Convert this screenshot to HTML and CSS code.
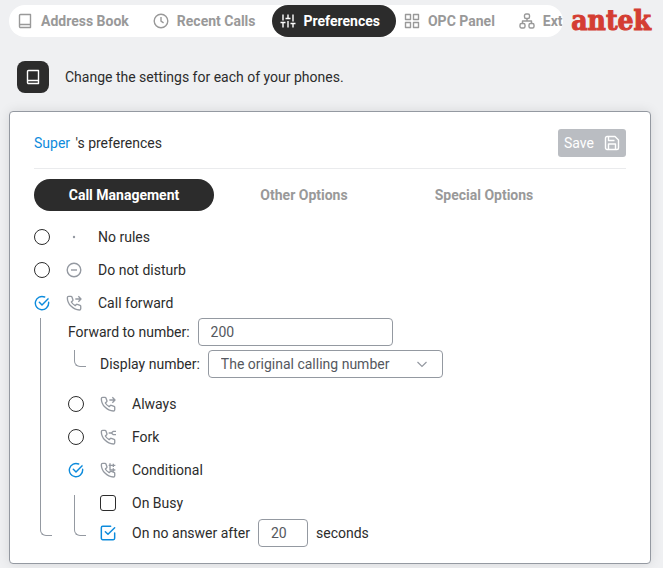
FILE: index.html
```html
<!DOCTYPE html>
<html lang="en">
<head>
    <meta charset="UTF-8">
    <meta name="viewport" content="width=device-width, initial-scale=1.0">
    <title>Preferences</title>
    <link rel="stylesheet" href="styles.css">
</head>
<body>
    <header class="header">
        <nav class="nav">
            <a href="#" class="nav-item">
                <svg class="icon" viewBox="0 0 16 16"><path d="M3.500 1.500h10v13h-10a1 1 0 0 1-1-1V2.500a1 1 0 0 1 1-1zM2.500 12.500a1 1 0 0 1 1-1h10"/></svg>
                Address Book
            </a>
            <a href="#" class="nav-item">
                <svg class="icon" viewBox="0 0 16 16"><circle cx="8" cy="8" r="6.800"/><path d="M8 4v4.200l2.600 1.600"/></svg>
                Recent Calls
            </a>
            <a href="#" class="nav-item active">
                <svg class="icon" viewBox="0 0 16 16"><path d="M3 1.500v6M3 9.500v5M.5 9.500h5M8 1.500v4M8 8v6.500M5.500 5.500h5M13 1.500v7M13 10.500v4M10.500 10.500h5"/></svg>
                Preferences
            </a>
            <a href="#" class="nav-item">
                <svg class="icon" viewBox="0 0 16 16"><path d="M1.500 1.500h5v5h-5zM9.500 1.500h5v5h-5zM1.500 9.500h5v5h-5zM9.500 9.500h5v5h-5z"/></svg>
                OPC Panel
            </a>
            <a href="#" class="nav-item">
                <svg class="icon" viewBox="0 0 16 16"><rect x="5.500" y="1" width="5" height="4.500" rx="1.500"/><rect x="1" y="10.500" width="5" height="4.500" rx="1.500"/><rect x="10" y="10.500" width="5" height="4.500" rx="1.500"/><path d="M8 5.500V8M3.500 10.500V8h9v2.500"/></svg>
                Ext
            </a>
        </nav>
        <div class="logo">antek</div>
    </header>

    <div class="intro">
        <div class="intro-icon">
            <svg class="icon" viewBox="0 0 16 16"><path d="M3.500 1.500h10v13h-10a1 1 0 0 1-1-1V2.500a1 1 0 0 1 1-1zM2.500 12.500a1 1 0 0 1 1-1h10"/></svg>
        </div>
        <p>Change the settings for each of your phones.</p>
    </div>

    <main class="card">
        <div class="card-head">
            <h1 class="title"><a href="#">Super</a> 's preferences</h1>
            <button class="save" type="button">
                Save
                <svg class="icon" viewBox="0 0 16 16"><path d="M3 1.500h8L14.500 5v8a1.500 1.500 0 0 1-1.500 1.500H3A1.500 1.500 0 0 1 1.500 13V3A1.500 1.500 0 0 1 3 1.500zM4.500 14.500V9h7v5.500M4.500 1.500V5.500h6"/></svg>
            </button>
        </div>

        <div class="tabs">
            <button class="tab active" type="button">Call Management</button>
            <button class="tab" type="button">Other Options</button>
            <button class="tab" type="button">Special Options</button>
        </div>

        <form class="rules">
            <div class="row">
                <input type="radio" name="rule" id="none">
                <svg class="icon" viewBox="0 0 16 16"><circle class="dot" cx="8" cy="8" r="1.200"/></svg>
                <label for="none">No rules</label>
            </div>
            <div class="row">
                <input type="radio" name="rule" id="dnd">
                <svg class="icon" viewBox="0 0 16 16"><circle cx="8" cy="8" r="6.800"/><path d="M5 8h6"/></svg>
                <label for="dnd">Do not disturb</label>
            </div>
            <div class="row">
                <input type="radio" name="rule" id="forward" checked>
                <svg class="icon" viewBox="0 0 24 24"><use href="#phone"/><path d="M14 6h8.500M18.500 2l4 4l-4 4"/></svg>
                <label for="forward">Call forward</label>
            </div>

            <div class="branch main-branch">
                <div class="line"></div>
                <div class="branch-body">
                    <div class="field">
                        <label for="number">Forward to number:</label>
                        <input type="text" class="text-input" id="number" value="200">
                    </div>
                    <div class="branch display">
                        <div class="line"></div>
                        <div class="field">
                            <label for="display">Display number:</label>
                            <select class="select" id="display">
                                <option>The original calling number</option>
                            </select>
                        </div>
                    </div>

                    <div class="row">
                        <input type="radio" name="mode" id="always">
                        <svg class="icon" viewBox="0 0 24 24"><use href="#phone"/><path d="M14 6h8.500M18.500 2l4 4l-4 4"/></svg>
                        <label for="always">Always</label>
                    </div>
                    <div class="row">
                        <input type="radio" name="mode" id="fork">
                        <svg class="icon" viewBox="0 0 24 24"><use href="#phone"/><path d="M13 6h4.500M24 3.500h-4l-3 2.500l3 2.500h4"/></svg>
                        <label for="fork">Fork</label>
                    </div>
                    <div class="row">
                        <input type="radio" name="mode" id="conditional" checked>
                        <svg class="icon" viewBox="0 0 24 24"><use href="#phone"/><path d="M15 2v10h8M13 5h10M20 2.500v5M20 9.500v5"/></svg>
                        <label for="conditional">Conditional</label>
                    </div>
                    <div class="branch conditions">
                        <div class="line"></div>
                        <div class="branch-body">
                            <div class="row">
                                <input type="checkbox" id="busy">
                                <label for="busy">On Busy</label>
                            </div>
                            <div class="row last">
                                <input type="checkbox" id="noanswer" checked>
                                <div class="field">
                                    <label for="noanswer">On no answer after</label>
                                    <input type="text" class="text-input short" id="seconds" value="20">
                                    <label for="seconds">seconds</label>
                                </div>
                            </div>
                        </div>
                    </div>
                </div>
            </div>
        </form>
    </main>

    <!-- shared handset shape -->
    <svg class="defs">
        <symbol id="phone" viewBox="0 0 24 24">
            <path d="M4 2h3.500a1.500 1.500 0 0 1 1.400 1l1.500 4a1.500 1.500 0 0 1-.4 1.600L8 10.500a15 15 0 0 0 5.800 5.500l1.700-1.700a1.500 1.500 0 0 1 1.600-.3l4 1.500a1.500 1.500 0 0 1 1 1.400V20.500a2 2 0 0 1-2 2C10.500 22 2 13.500 2 4a2 2 0 0 1 2-2z"/>
        </symbol>
    </svg>
</body>
</html>
```

FILE: styles.css
```css
* {
    box-sizing: border-box;
}
body {
    margin: 0;
    padding: 5px 12px 4px 9px;
    background: #eff0f2;
    color: #2c2c2c;
    font-family: Roboto, sans-serif;
    font-size: 14px;
    line-height: 20px;
}
a {
    text-decoration: none;
}
button, input, select {
    margin: 0;
    font: inherit;
}
.icon {
    width: 16px;
    height: 16px;
    flex-shrink: 0;
    fill: none;
    stroke: currentColor;
    stroke-width: 1.4;
    stroke-linejoin: round;
}
.defs {
    display: none;
}

.header {
    display: flex;
    align-items: center;
    gap: 8px;
}
.nav {
    display: flex;
    flex: 1;
    min-width: 0;
    overflow: hidden;
    border-radius: 16px;
    background: #fff;
}
.nav-item {
    display: flex;
    flex-shrink: 0;
    align-items: center;
    gap: 8px;
    height: 32px;
    padding: 0 16px 0 8px;
    border-radius: 16px;
    color: #999;
    font-weight: bold;
}
.nav-item.active, .tab.active {
    background: #2c2c2c;
    color: #fff;
}
.logo {
    color: #d43d33;
    font-family: "DejaVu Serif Condensed", "DejaVu Serif", serif;
    font-size: 28px;
    font-weight: bold;
    line-height: 32px;
    -webkit-text-stroke: 1px #d43d33;
}

.intro {
    display: flex;
    align-items: center;
    gap: 16px;
    margin: 24px 8px 18px;
}
.intro p {
    margin: 0;
}
.intro-icon {
    display: flex;
    align-items: center;
    justify-content: center;
    width: 32px;
    height: 32px;
    border-radius: 8px;
    background: #2c2c2c;
    color: #fff;
}

.card {
    padding: 17px 24px 16px;
    border: 1px solid #9499a1;
    border-radius: 4px;
    background: #fff;
    box-shadow: 0 0 12px rgba(0, 0, 0, 0.1);
}
.card-head {
    display: flex;
    align-items: center;
    justify-content: space-between;
    padding-bottom: 11px;
    border-bottom: 1px solid #eaebed;
}
.title {
    margin: 0;
    font-size: 14px;
    font-weight: normal;
}
.title a {
    margin-right: 2px;
    color: #0d8bdc;
}
.save {
    display: flex;
    align-items: center;
    gap: 10px;
    height: 28px;
    padding: 0 6px;
    border: none;
    border-radius: 3px;
    background: #babdc2;
    color: #fff;
}

.tabs {
    display: flex;
    margin: 10px 0;
}
.tab {
    width: 180px;
    height: 32px;
    border: none;
    border-radius: 16px;
    background: none;
    color: #999;
    font-weight: bold;
}

.row {
    display: flex;
    align-items: center;
    gap: 16px;
    height: 32px;
    margin-bottom: 1px;
}
.row .icon {
    color: #9499a1;
}
.row .icon[viewBox="0 0 24 24"] {
    stroke-width: 2;
}
.row .dot {
    fill: currentColor;
    stroke: none;
}
.row input[type="radio"], .row input[type="checkbox"] {
    appearance: none;
    flex-shrink: 0;
    width: 16px;
    height: 16px;
    border: 1px solid #2c2c2c;
    border-radius: 50%;
}
.row input[type="checkbox"] {
    border-radius: 3px;
}
.row input[type="radio"]:checked {
    border: none;
    background: url("data:image/svg+xml,%3Csvg xmlns='http://www.w3.org/2000/svg' viewBox='0 0 24 24' fill='none' stroke='%230d8bdc' stroke-width='2.200' stroke-linecap='round' stroke-linejoin='round'%3E%3Cpath d='M22 11v1a10 10 0 1 1-6-9M8 11l4 4L22 5'/%3E%3C/svg%3E");
}
.row input[type="checkbox"]:checked {
    border: none;
    border-radius: 0;
    background: url("data:image/svg+xml,%3Csvg xmlns='http://www.w3.org/2000/svg' viewBox='0 0 24 24' fill='none' stroke='%230d8bdc' stroke-width='2.200' stroke-linecap='round' stroke-linejoin='round'%3E%3Cpath d='M22 12v8a2 2 0 0 1-2 2H4a2 2 0 0 1-2-2V4a2 2 0 0 1 2-2h12M8 10l4 4L22 4'/%3E%3C/svg%3E");
}

.branch {
    display: flex;
    gap: 14px;
    margin-left: 6px;
}
.branch.main-branch {
    gap: 16px;
    margin-top: -2px;
}
.line {
    flex-shrink: 0;
    width: 12px;
    margin-bottom: 11px;
    border: solid #9499a1;
    border-width: 0 0 1px 1px;
    border-bottom-left-radius: 6px;
}
.branch-body {
    flex: 1;
}
.field {
    display: flex;
    align-items: center;
    gap: 8px;
}
.text-input, .select {
    width: 195px;
    height: 28px;
    padding: 0 12px;
    border: 1px solid #9499a1;
    border-radius: 4px;
    background: #fff;
    color: #55585e;
}
.select {
    appearance: none;
    width: 235px;
    background: #fff url("data:image/svg+xml,%3Csvg xmlns='http://www.w3.org/2000/svg' viewBox='0 0 12 12' fill='none' stroke='%239499a1' stroke-width='1.200'%3E%3Cpath d='M1.500 4L6 8.500L10.500 4'/%3E%3C/svg%3E") no-repeat right 14px center / 12px;
}
.text-input.short {
    width: 50px;
}
.branch.display {
    margin-top: 4px;
    margin-bottom: 10px;
}
.conditions .line {
    margin-top: 8px;
}
.conditions .row {
    margin: 0;
}
.row.last {
    height: 28px;
}
```
